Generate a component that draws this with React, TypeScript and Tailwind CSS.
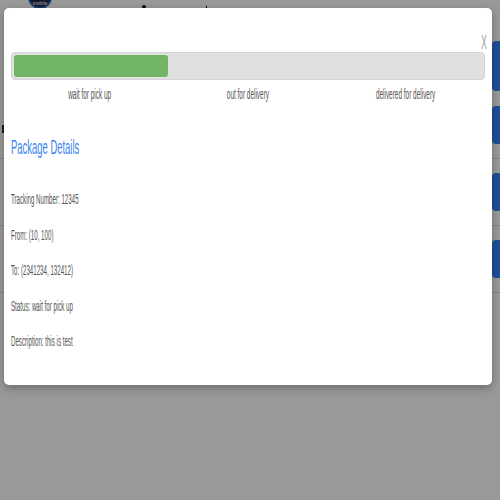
import React from 'react';

const steps = ['wait for pick up', 'out for delivery', 'delivered for delivery'];

const details = [
  'Tracking Number: 12345',
  'From: (10, 100)',
  'To: (2341234, 132412)',
  'Status: wait for pick up',
  'Description: this is test',
];

const BackgroundPage: React.FC = () => (
  <div className="w-[560px] bg-white font-['Liberation_Sans',sans-serif]">
    <div className="flex h-[9px] items-end overflow-hidden">
      <div className="ml-[28px] flex h-[24px] w-[24px] shrink-0 items-end justify-center rounded-full border-2 border-[#2c5fb8] bg-[#1d2a44]">
        <span className="mb-[1px] text-[5px] leading-none text-white">mobile</span>
      </div>
      <div className="ml-[90px] h-[4px] w-[4px] rounded-full bg-black" />
      <div className="ml-[60px] h-[3px] w-[1px] bg-black" />
    </div>
    <div className="flex h-[83px] items-end justify-end pb-[1px]">
      <div className="mr-[-8px] h-[50px] w-[76px] rounded-[4px] bg-[#3584fa]" />
    </div>
    {[0, 1, 2].map((i) => (
      <div key={i} className="flex h-[67px] items-center border-b border-[#dcdcdc]">
        {i === 0 && <div className="ml-[2px] mt-[8px] h-[8px] w-[2px] bg-[#333]" />}
        <div className="ml-auto mr-[-8px] h-[38px] w-[76px] rounded-[4px] bg-[#3584fa]" />
      </div>
    ))}
    <div className="h-[220px]" />
  </div>
);

export default function App() {
  return (
    <div className="relative h-[500px] w-[500px] overflow-hidden">
      <BackgroundPage />
      <div className="absolute inset-0 bg-black/40 pl-[4px] pt-[8px]">
        <div className="flex h-[377px] w-[488px] flex-col rounded-[5px] bg-white px-[7px] font-['Liberation_Sans',sans-serif] shadow-[0_3px_8px_rgba(0,0,0,0.3)]">
          <div className="flex h-[44px] items-end justify-end">
            <span className="mr-[-6px] inline-block origin-center scale-x-[0.4] text-[21px] leading-none text-[#a0a0a0]">X</span>
          </div>
          <div className="h-[28px] rounded-[4px] border border-[#d4d4d4] bg-[#e0e0e0] p-[2px]">
            <div className="h-full w-[33%] rounded-[3px] bg-[#72b566]" />
          </div>
          <div className="mt-[6px] grid grid-cols-3">
            {steps.map((s) => (
              <div key={s} className="flex justify-center">
                <span className="inline-block origin-center scale-x-[0.46] whitespace-nowrap text-[14px] leading-[17px] text-[#555]">{s}</span>
              </div>
            ))}
          </div>
          <div className="mt-[31px]">
            <span className="inline-block origin-left scale-x-[0.45] whitespace-nowrap text-[21px] leading-[25px] text-[#3a86f0]">Package Details</span>
          </div>
          <div className="mt-[30px] flex flex-col gap-[18.5px]">
            {details.map((d) => (
              <span key={d} className="inline-block origin-left scale-x-[0.44] whitespace-nowrap text-[14px] leading-[17px] text-[#555]">{d}</span>
            ))}
          </div>
        </div>
      </div>
    </div>
  );
}
